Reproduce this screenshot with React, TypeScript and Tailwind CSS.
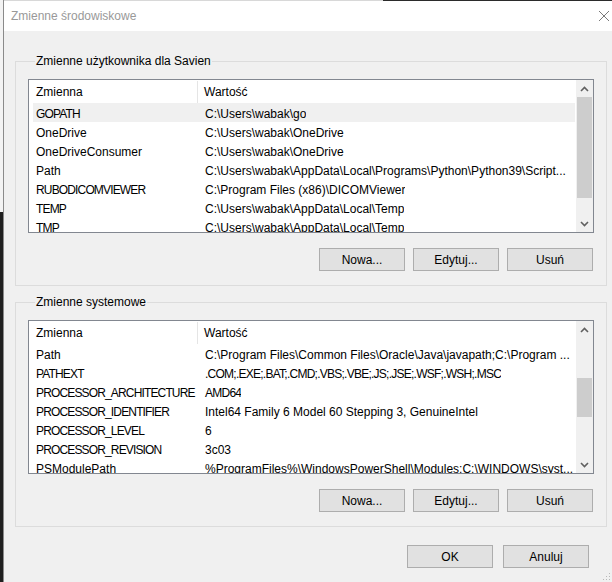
import React from 'react';

type Row = [string, string];

const userVars: Row[] = [
  ['GOPATH', String.raw`C:\Users\wabak\go`],
  ['OneDrive', String.raw`C:\Users\wabak\OneDrive`],
  ['OneDriveConsumer', String.raw`C:\Users\wabak\OneDrive`],
  ['Path', String.raw`C:\Users\wabak\AppData\Local\Programs\Python\Python39\Script...`],
  ['RUBODICOMVIEWER', String.raw`C:\Program Files (x86)\DICOMViewer`],
  ['TEMP', String.raw`C:\Users\wabak\AppData\Local\Temp`],
  ['TMP', String.raw`C:\Users\wabak\AppData\Local\Temp`],
];

const systemVars: Row[] = [
  ['Path', String.raw`C:\Program Files\Common Files\Oracle\Java\javapath;C:\Program ...`],
  ['PATHEXT', '.COM;.EXE;.BAT;.CMD;.VBS;.VBE;.JS;.JSE;.WSF;.WSH;.MSC'],
  ['PROCESSOR_ARCHITECTURE', 'AMD64'],
  ['PROCESSOR_IDENTIFIER', 'Intel64 Family 6 Model 60 Stepping 3, GenuineIntel'],
  ['PROCESSOR_LEVEL', '6'],
  ['PROCESSOR_REVISION', '3c03'],
  ['PSModulePath', String.raw`%ProgramFiles%\WindowsPowerShell\Modules;C:\WINDOWS\syst...`],
];

// Arial caps run wider than Segoe UI's, so all-caps strings get squeezed a bit
const isCaps = (s: string) => /^[A-Z_.;0-9]+$/.test(s) && /[A-Z]{3}/.test(s);

function Chevron({ down }: { down?: boolean }) {
  return (
    <svg width="9" height="6" viewBox="0 0 9 6" className={down ? 'rotate-180' : ''}>
      <path d="M1 5 L4.5 1.5 L8 5" fill="none" stroke="#606060" strokeWidth="1.6" />
    </svg>
  );
}

function Scrollbar({ thumbClass }: { thumbClass: string }) {
  return (
    <div className="flex w-[17px] shrink-0 flex-col bg-[#f0f0f0]">
      <div className="flex h-[17px] shrink-0 items-center justify-center">
        <Chevron />
      </div>
      <div className="flex flex-1 flex-col">
        <div className={`mx-[1px] bg-[#cdcdcd] ${thumbClass}`} />
      </div>
      <div className="flex h-[17px] shrink-0 items-center justify-center">
        <Chevron down />
      </div>
    </div>
  );
}

function VarList({ rows, selected, thumbClass }: { rows: Row[]; selected?: number; thumbClass: string }) {
  return (
    <div className="mt-[10px] flex h-[154px] border border-[#828790] bg-white">
      <div className="flex min-w-0 flex-1 flex-col overflow-hidden pl-[4px] pr-[1px]">
        <div className="flex h-[23px] shrink-0 pt-[1px]">
          <div className="flex w-[165px] shrink-0 items-center border-r border-[#e5e5e5] pl-[3px]">Zmienna</div>
          <div className="flex items-center pl-[6px]">Wartość</div>
        </div>
        {rows.map(([name, value], i) => (
          <div
            key={name}
            className={`flex h-[19px] shrink-0 items-center whitespace-nowrap pt-[2px] ${i === selected ? 'bg-[#f0f0f0]' : ''}`}
          >
            <div className={`w-[165px] shrink-0 overflow-hidden pl-[3px] ${isCaps(name) ? 'tracking-[-0.85px]' : ''}`}>
              {name}
            </div>
            <div className={`min-w-0 overflow-hidden pl-[7px] ${isCaps(value) ? 'tracking-[-0.75px]' : ''}`}>
              {value}
            </div>
          </div>
        ))}
      </div>
      <Scrollbar thumbClass={thumbClass} />
    </div>
  );
}

function Button({ children }: { children: React.ReactNode }) {
  return (
    <button className="flex h-[23px] w-[86px] items-center justify-center border border-[#adadad] bg-[#e1e1e1] pt-[1px]">
      {children}
    </button>
  );
}

function ButtonRow() {
  return (
    <div className="mt-[15px] flex justify-end gap-[8px] pr-[1px]">
      <Button>Nowa...</Button>
      <Button>Edytuj...</Button>
      <Button>Usuń</Button>
    </div>
  );
}

export default function App() {
  return (
    <div className="flex h-[582px] w-[612px] overflow-hidden font-['Liberation_Sans',Arial,sans-serif] text-[12px] text-black">
      {/* window behind the dialog */}
      <div className="flex w-[3px] shrink-0 flex-col">
        <div className="h-[212px] bg-[#f3f3f3]" />
        <div className="flex-1 bg-[#1f1f1f]" />
      </div>

      <div className="relative flex flex-1 flex-col border-l border-[#8a8a8a] bg-[#f0f0f0]">
        <div className="flex h-[1px] shrink-0">
          <div className="w-[379px] bg-[#d8d8d8]" />
          <div className="flex-1 bg-[#2b2b2b]" />
        </div>
        <div className="flex h-[30px] shrink-0 items-center justify-between bg-white pl-[7px] pr-[2px]">
          <span className="text-[#999999]">Zmienne środowiskowe</span>
          <svg width="12" height="12" viewBox="0 0 12 12">
            <path d="M1 1 L11 11 M11 1 L1 11" stroke="#7a7a7a" strokeWidth="1" />
          </svg>
        </div>

        <div className="flex flex-1 flex-col pl-[11px] pr-[5px] pt-[22px]">
          <fieldset className="border border-[#dcdcdc] px-[12px] pb-[14px]">
            <legend className="ml-[7px] px-[1px] leading-[16px]">Zmienne użytkownika dla Savien</legend>
            <VarList rows={userVars} selected={0} thumbClass="h-[101px]" />
            <ButtonRow />
          </fieldset>

          <fieldset className="mt-[8px] border border-[#dcdcdc] px-[12px] pb-[14px]">
            <legend className="ml-[7px] px-[1px] leading-[16px]">Zmienne systemowe</legend>
            <VarList rows={systemVars} thumbClass="mt-[40px] h-[39px]" />
            <ButtonRow />
          </fieldset>

          <div className="mt-[18px] flex justify-end gap-[10px] pr-[18px]">
            <Button>OK</Button>
            <Button>Anuluj</Button>
          </div>
        </div>

        <svg width="8" height="8" viewBox="0 0 8 8" className="absolute bottom-[1px] right-[1px]">
          <rect x="6" y="0" width="1" height="1" fill="#b8b8b8" />
          <rect x="3" y="3" width="1" height="1" fill="#b8b8b8" />
          <rect x="6" y="3" width="1" height="1" fill="#b8b8b8" />
          <rect x="0" y="6" width="1" height="1" fill="#b8b8b8" />
          <rect x="3" y="6" width="1" height="1" fill="#b8b8b8" />
          <rect x="6" y="6" width="1" height="1" fill="#b8b8b8" />
        </svg>
      </div>
    </div>
  );
}
